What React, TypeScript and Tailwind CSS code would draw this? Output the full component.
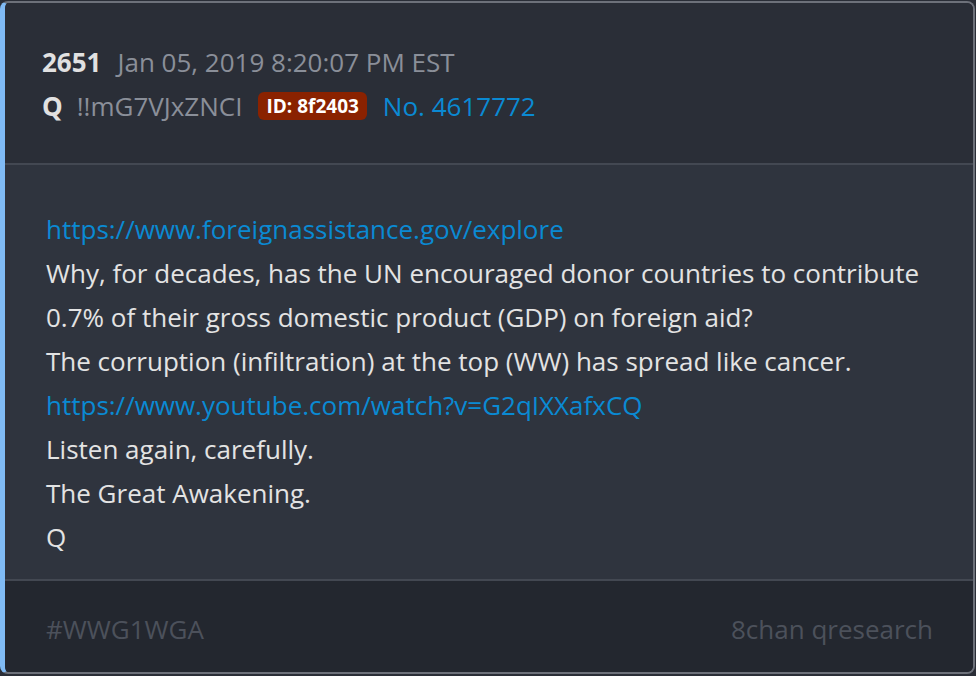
export default function App() {
  return (
    <div className="w-[976px] h-[676px] bg-[#2a2e37] pt-px" style={{ fontFamily: '"Open Sans", sans-serif' }}>
      <div className="w-[975px] h-[673px] rounded-[8px] border-2 border-[#6d717a] border-l-[5px] border-l-[#80bbf5] overflow-hidden flex flex-col">
        <div className="bg-[#2a2e37] h-[160px] pl-[37px] pt-[37px] flex flex-col">
          <div className="flex items-center h-[44px] text-[26px]">
            <span className="font-bold text-[#e1e1e1]">2651</span>
            <span className="ml-[16px] text-[#8a8f99]">Jan 05, 2019 8:20:07 PM EST</span>
          </div>
          <div className="flex items-center h-[44px] text-[26px]">
            <span className="font-bold text-[#e1e1e1]">Q</span>
            <span className="ml-[14px] text-[#8a8f99]">!!mG7VJxZNCI</span>
            <span className="ml-[16px] h-[28px] px-[8px] rounded-[6px] bg-[#8a2200] text-white font-bold text-[19px] leading-[28px]">ID: 8f2403</span>
            <span className="ml-[16px] text-[#0a8ad3]">No. 4617772</span>
          </div>
        </div>
        <div className="h-[2px] bg-[#434852]" />
        <div className="bg-[#2f343e] h-[414px] pl-[41px] pt-[42px] text-[26px] leading-[44px] text-[#e3e3e3]">
          <div className="text-[#0a8ad3]">https://www.foreignassistance.gov/explore</div>
          <div>Why, for decades, has the UN encouraged donor countries to contribute</div>
          <div>0.7% of their gross domestic product (GDP) on foreign aid?</div>
          <div>The corruption (infiltration) at the top (WW) has spread like cancer.</div>
          <div className="text-[#0a8ad3]">https://www.youtube.com/watch?v=G2qIXXafxCQ</div>
          <div>Listen again, carefully.</div>
          <div>The Great Awakening.</div>
          <div>Q</div>
        </div>
        <div className="h-[2px] bg-[#434852]" />
        <div className="bg-[#23272f] flex-1 pl-[41px] pr-[40px] pt-[33px] flex justify-between text-[26px] leading-[30px] text-[#4c515b]">
          <span>#WWG1WGA</span>
          <span>8chan qresearch</span>
        </div>
      </div>
    </div>
  );
}
